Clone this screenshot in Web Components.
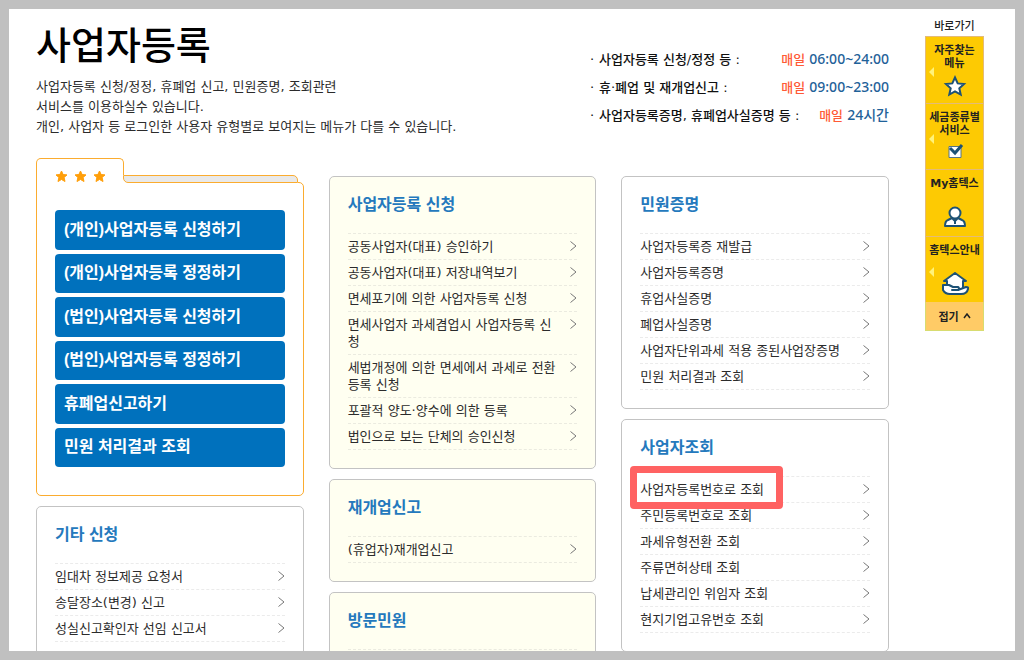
<!DOCTYPE html>
<html lang="ko">
<head>
<meta charset="utf-8">
<meta name="viewport" content="width=device-width, initial-scale=1">
<title>사업자등록</title>
<style>
  body {
    margin: 0;
    font-family: "DejaVu Sans", "Noto Sans CJK KR", sans-serif;
    font-size: 13px;
    color: #2b2b2b;
  }
</style>
</head>
<body>
<page-frame>
  <page-header slot="header" heading="사업자등록">
    사업자등록 신청/정정, 휴폐업 신고, 민원증명, 조회관련<br>
    서비스를 이용하실수 있습니다.<br>
    개인, 사업자 등 로그인한 사용자 유형별로 보여지는 메뉴가 다를 수 있습니다.
    <service-hours slot="hours" label="사업자등록 신청/정정 등 :" time="06:00~24:00"></service-hours>
    <service-hours slot="hours" label="휴·폐업 및 재개업신고 :" time="09:00~23:00"></service-hours>
    <service-hours slot="hours" label="사업자등록증명, 휴폐업사실증명 등 :" time="24시간"></service-hours>
  </page-header>

  <card-column>
    <folder-card>
      <folder-button>(개인)사업자등록 신청하기</folder-button>
      <folder-button>(개인)사업자등록 정정하기</folder-button>
      <folder-button>(법인)사업자등록 신청하기</folder-button>
      <folder-button>(법인)사업자등록 정정하기</folder-button>
      <folder-button>휴폐업신고하기</folder-button>
      <folder-button>민원 처리결과 조회</folder-button>
    </folder-card>
    <menu-card heading="기타 신청">
      <menu-item>임대차 정보제공 요청서</menu-item>
      <menu-item>송달장소(변경) 신고</menu-item>
      <menu-item>성실신고확인자 선임 신고서</menu-item>
    </menu-card>
  </card-column>

  <card-column>
    <menu-card heading="사업자등록 신청" tinted>
      <menu-item>공동사업자(대표) 승인하기</menu-item>
      <menu-item>공동사업자(대표) 저장내역보기</menu-item>
      <menu-item>면세포기에 의한 사업자등록 신청</menu-item>
      <menu-item>면세사업자 과세겸업시 사업자등록 신청</menu-item>
      <menu-item>세법개정에 의한 면세에서 과세로 전환 등록 신청</menu-item>
      <menu-item>포괄적 양도·양수에 의한 등록</menu-item>
      <menu-item>법인으로 보는 단체의 승인신청</menu-item>
    </menu-card>
    <menu-card heading="재개업신고" tinted>
      <menu-item>(휴업자)재개업신고</menu-item>
    </menu-card>
    <menu-card heading="방문민원" tinted></menu-card>
  </card-column>

  <card-column>
    <menu-card heading="민원증명">
      <menu-item>사업자등록증 재발급</menu-item>
      <menu-item>사업자등록증명</menu-item>
      <menu-item>휴업사실증명</menu-item>
      <menu-item>폐업사실증명</menu-item>
      <menu-item>사업자단위과세 적용 종된사업장증명</menu-item>
      <menu-item>민원 처리결과 조회</menu-item>
    </menu-card>
    <menu-card heading="사업자조회">
      <menu-item marked>사업자등록번호로 조회</menu-item>
      <menu-item>주민등록번호로 조회</menu-item>
      <menu-item>과세유형전환 조회</menu-item>
      <menu-item>주류면허상태 조회</menu-item>
      <menu-item>납세관리인 위임자 조회</menu-item>
      <menu-item>현지기업고유번호 조회</menu-item>
    </menu-card>
  </card-column>

  <quick-menu slot="aside" heading="바로가기" fold="접기">
    <quick-link arrow>자주찾는<br>메뉴
      <svg slot="icon" width="24" height="22" viewBox="0 0 24 22" fill="#fff" stroke="#1d5276" stroke-width="2" stroke-linejoin="miter"><path d="M12 2.500l2.700 5.900 6.300.7-4.700 4.200 1.400 6.300L12 16.400l-5.700 3.200 1.400-6.300L3 9.100l6.300-.7z"/></svg>
    </quick-link>
    <quick-link arrow>세금종류별<br>서비스
      <svg slot="icon" width="22" height="22" viewBox="0 0 22 22" fill="none"><path d="M5 5.500h12v11H5z" fill="#fff" stroke="#55748a"/><path d="M6 7l5 5 7-8" stroke="#1d5276" stroke-width="3"/></svg>
    </quick-link>
    <quick-link>My홈텍스
      <svg slot="icon" width="24" height="24" viewBox="0 0 24 24" fill="#fff" stroke="#1d5276" stroke-width="2" stroke-linejoin="round"><path d="M9 12l-4 2q-3 1-3 6h20q0-5-3-6l-4-2-3 3z"/><circle cx="12" cy="7" r="5.500"/><path d="M12 14v4"/></svg>
    </quick-link>
    <quick-link arrow>홈텍스안내
      <svg slot="icon" width="28" height="24" viewBox="0 0 28 24" fill="#fff" stroke="#1d5276" stroke-width="2" stroke-linejoin="round" stroke-linecap="round"><path d="M6 16V9H3l11-8 11 8h-3v8H6z"/><path d="M2 13h6l4 2h5q2 1 0 3l8-3q3 0 2 2-1 5-7 5H9q-5 0-7-4z"/><path d="M11 18h6" fill="none"/></svg>
    </quick-link>
  </quick-menu>
</page-frame>

<script>
  class BaseElement extends HTMLElement {
    constructor() {
      super();
      const template = document.createElement('template');
      template.innerHTML = this.constructor.markup;
      this.attachShadow({ mode: 'open' }).append(template.content.cloneNode(true));
    }
    connectedCallback() {
      this.shadowRoot.querySelectorAll('[data-attr]').forEach(node => {
        node.textContent = this.getAttribute(node.dataset.attr) || '';
      });
    }
  }

  class PageFrame extends BaseElement {
    static markup = `
      <style>
        :host { display: block; box-sizing: border-box; height: 100vh; overflow: hidden;
          border: 9px solid #c0c0c0; background: #fff; }
        .page { display: grid; grid-template-columns: minmax(0, 1fr) 59px; gap: 36px;
          padding: 9px 31px 0 27px; }
        .columns { display: grid; grid-template-columns: repeat(3, minmax(0, 1fr)); gap: 25px;
          align-items: start; margin-top: 39px; }
      </style>
      <div class="page">
        <main><slot name="header"></slot><div class="columns"><slot></slot></div></main>
        <slot name="aside"></slot>
      </div>`;
  }

  class PageHeader extends BaseElement {
    static markup = `
      <style>
        :host { display: flex; justify-content: space-between; }
        h1 { margin: 0 0 3px; font-size: 38px; line-height: 56px; font-weight: 500; color: #000; }
        p { margin: 0; line-height: 20px; white-space: nowrap; }
        .hours { flex: 0 0 299px; padding-top: 28px; }
      </style>
      <div><h1 data-attr="heading"></h1><p><slot></slot></p></div>
      <div class="hours"><slot name="hours"></slot></div>`;
  }

  class ServiceHours extends BaseElement {
    static markup = `
      <style>
        :host { display: flex; justify-content: space-between; height: 28px; line-height: 28px;
          font-weight: 500; color: #111; white-space: nowrap; }
        .label::before { content: "·"; display: inline-block; width: 9px; }
        .day { color: #ff5a36; }
        .time { font-family: "Noto Sans", "Noto Sans CJK KR", sans-serif; font-size: 14px;
          line-height: 20px; color: #1f6299; }
      </style>
      <span class="label" data-attr="label"></span>
      <span><span class="day">매일</span> <span class="time" data-attr="time"></span></span>`;
  }

  class CardColumn extends BaseElement {
    static markup = `
      <style>:host { display: flex; flex-direction: column; gap: 10px; }</style>
      <slot></slot>`;
  }

  class FolderCard extends BaseElement {
    static markup = `
      <style>
        :host { display: block; margin-top: -18px; }
        .top { display: flex; align-items: flex-end; position: relative; margin-bottom: -1px; }
        .tab { box-sizing: border-box; width: 88px; height: 25px; padding: 11px 0 0 18px;
          display: flex; gap: 6px; background: #fff; border: 1px solid #fbac2f; border-bottom: 0;
          border-radius: 5px 5px 0 0; }
        .strip { flex: 1; margin: 0 6px 0 -1px; background: #fff; z-index: 1; }
        .strip div { height: 6px; background: #e9e9e9; border: 1px solid #fbac2f;
          border-radius: 0 5px 0 5px; }
        .body { border: 1px solid #fbac2f; border-radius: 0 5px 5px 5px; padding: 27px 18px 28px; }
        .buttons { display: grid; grid-auto-rows: 1fr; gap: 4px; min-height: 257px; }
      </style>
      <div class="top">
        <div class="tab"></div>
        <div class="strip"><div></div></div>
      </div>
      <div class="body"><div class="buttons"><slot></slot></div></div>`;
    constructor() {
      super();
      const star = '<svg width="13" height="13" viewBox="0 0 13 13"><path fill="#ff9f0a" stroke="#ff9f0a" stroke-linejoin="round" d="M6.500 1l1.600 3.500 3.900.4-2.900 2.500.9 4.100-3.500-2-3.500 2 .9-4.100L1 4.900l3.900-.4z"/></svg>';
      this.shadowRoot.querySelector('.tab').innerHTML = star.repeat(3);
    }
  }

  class FolderButton extends BaseElement {
    static markup = `
      <style>
        :host { display: grid; }
        button { border: 0; border-radius: 4px; padding: 0 9px; background: #0071bd; color: #fff;
          font: 700 16px/24px "Liberation Sans", "Noto Sans CJK KR", sans-serif;
          text-align: left; cursor: pointer; }
      </style>
      <button type="button"><slot></slot></button>`;
  }

  class MenuCard extends BaseElement {
    static markup = `
      <style>
        :host { display: block; padding: 17px 18px 18px; border: 1px solid #c3c3c3;
          border-radius: 5px; background: #fff; --dash: #ebebeb; }
        :host([tinted]) { background: #fffff1; --dash: #ebebe0; }
        h2 { margin: 0 0 17px; font-family: "Liberation Sans", "Noto Sans CJK KR", sans-serif;
          font-size: 16px; line-height: 22px; font-weight: 700; color: #2479bd; }
        .list { border-top: 1px dashed var(--dash); min-height: 26px; }
      </style>
      <h2 data-attr="heading"></h2>
      <div class="list" role="list"><slot></slot></div>`;
  }

  class MenuItem extends BaseElement {
    static markup = `
      <style>
        :host { display: block; border-bottom: 1px dashed var(--dash); }
        a { display: flex; justify-content: space-between; gap: 11px; padding: 4px 0;
          line-height: 17px; color: inherit; text-decoration: none; }
        svg { flex: none; margin-top: 3px; }
        :host([marked]) { position: relative; z-index: 1; }
        :host([marked])::before { content: ""; position: absolute; z-index: -1; box-sizing: border-box;
          left: -10px; top: -11px; width: 153px; height: 43px;
          border: 7px solid #ff6262; border-radius: 4px; background: #fff; }
      </style>
      <a href="#"><span><slot></slot></span>
        <svg width="7" height="10" viewBox="0 0 7 10" fill="none" stroke="#777"><path d="M.5.5L6 5 .5 9.500"/></svg>
      </a>`;
    connectedCallback() { this.setAttribute('role', 'listitem'); }
  }

  class QuickMenu extends BaseElement {
    static markup = `
      <style>
        :host { display: block; text-align: center; color: #222; font-size: 11px; font-weight: 700; }
        h2 { margin: 0; font-size: 11px; line-height: 18px; font-weight: 500; }
        nav { display: grid; grid-auto-rows: 1fr; min-height: 266px; }
        button { display: block; width: 100%; height: 29px; padding: 0; border: 1px solid #d8dc70;
          border-top: 0; background: #ffcb66; color: inherit; font: inherit; cursor: pointer; }
      </style>
      <h2 data-attr="heading"></h2>
      <nav><slot></slot></nav>
      <button type="button"><span data-attr="fold"></span>
        <svg width="8" height="8" viewBox="0 0 8 8" fill="none" stroke="#222" stroke-width="1.500"><path d="M1 5l3-4 3 4"/></svg>
      </button>`;
  }

  class QuickLink extends BaseElement {
    static markup = `
      <style>
        :host { display: grid; position: relative; }
        a { display: flex; flex-direction: column; align-items: center;
          justify-content: space-between; padding: 7px 0 6px; white-space: nowrap;
          line-height: 13px; color: inherit; text-decoration: none; background: #fdca03;
          border: 1px solid #e4bb78; border-bottom: 0; }
        :host([arrow])::before { content: ""; position: absolute; left: 4px; top: 31px;
          border: 5px solid transparent; border-right-color: #fff27a; border-left: 0; }
      </style>
      <a href="#"><span><slot></slot></span><slot name="icon"></slot></a>`;
  }

  customElements.define('page-frame', PageFrame);
  customElements.define('page-header', PageHeader);
  customElements.define('service-hours', ServiceHours);
  customElements.define('card-column', CardColumn);
  customElements.define('folder-card', FolderCard);
  customElements.define('folder-button', FolderButton);
  customElements.define('menu-card', MenuCard);
  customElements.define('menu-item', MenuItem);
  customElements.define('quick-menu', QuickMenu);
  customElements.define('quick-link', QuickLink);
</script>
</body>
</html>
